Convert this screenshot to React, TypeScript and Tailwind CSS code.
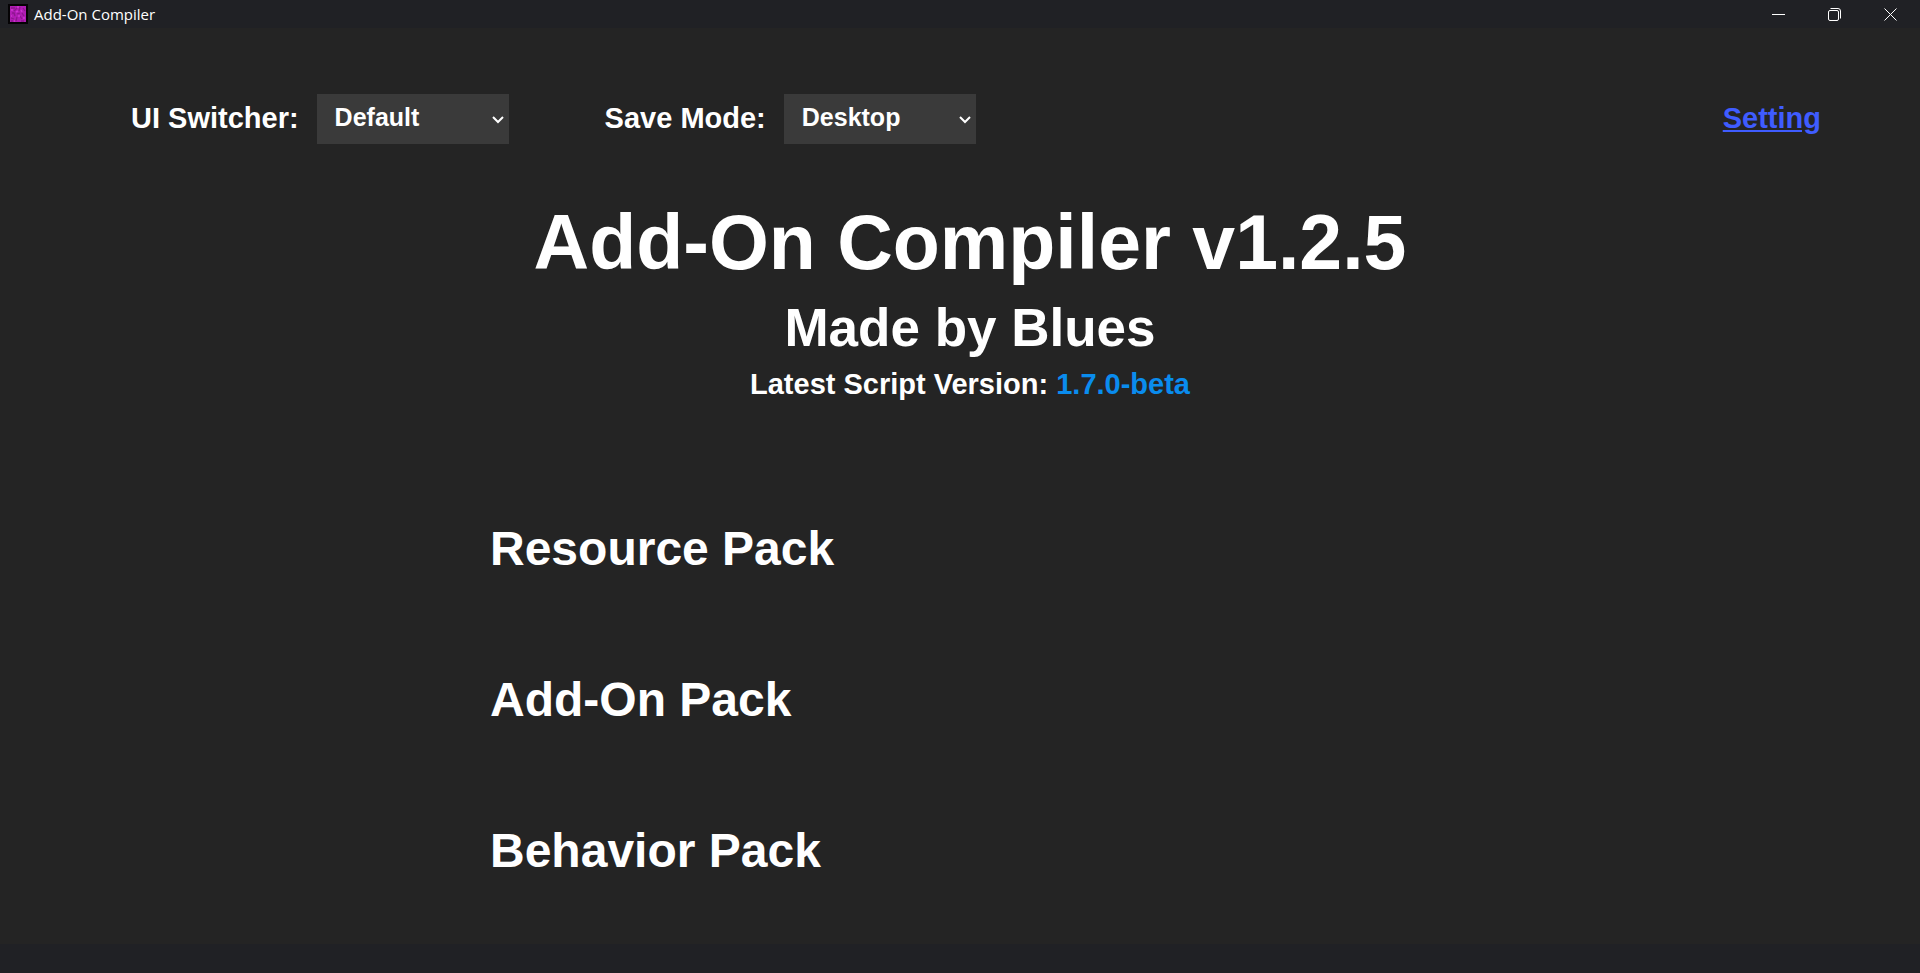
import { useState } from "react";

function AppIcon() {
  return (
    <svg viewBox="0 0 20 20" className="h-5 w-5" aria-hidden="true">
      <rect width="20" height="20" fill="#050305" />
      <rect x="2" y="2" width="16" height="16" fill="#b01db4" />
      <path
        d="M3 4h4M6 7l3-3M12 3l-1 4M15 4l2 3M4 9h2l1 3M9 10l3-1M14 9l2 3M3 14l3 1M9 13l-1 4M12 12l2 3M13 17h3M3 17h2"
        stroke="#8d168f"
        strokeWidth="1.3"
        fill="none"
      />
      <path
        d="M9 3h2M3 6h2M13 6l1 2M8 8l2-1M10 12h2M3 12h1M15 14h2M6 17h1"
        stroke="#cf35d4"
        strokeWidth="1.4"
        fill="none"
      />
    </svg>
  );
}

const windowButton = "flex h-7 w-14 items-center justify-center text-white";

function TitleBar() {
  return (
    <header className="flex h-7 items-center justify-between bg-[#202125] pr-0.5 pl-2">
      <div className="flex items-center gap-1.5">
        <AppIcon />
        <span className="font-['Open_Sans',sans-serif] text-[15px] leading-7 font-normal text-white">
          Add-On Compiler
        </span>
      </div>
      <div className="flex">
        <button type="button" aria-label="Minimize" className={windowButton}>
          <svg viewBox="0 0 13 13" className="h-[13px] w-[13px]" fill="none" stroke="currentColor">
            <path d="M0 6.5h13" />
          </svg>
        </button>
        <button type="button" aria-label="Restore" className={windowButton}>
          <svg viewBox="0 0 13 13" className="h-[13px] w-[13px]" fill="none" stroke="currentColor">
            <rect x="0.5" y="2.5" width="10" height="10" rx="1.5" />
            <path d="M2.5 0.5H10a2.5 2.5 0 0 1 2.5 2.5V10.5" />
          </svg>
        </button>
        <button type="button" aria-label="Close" className={windowButton}>
          <svg viewBox="0 0 13 13" className="h-[13px] w-[13px]" fill="none" stroke="currentColor">
            <path d="M0.5 0.5l12 12M12.5 0.5l-12 12" />
          </svg>
        </button>
      </div>
    </header>
  );
}

type PickerProps = { id: string; label: string; options: string[] };

function Picker({ id, label, options }: PickerProps) {
  const [value, setValue] = useState(options[0]);
  return (
    <div className="flex items-start gap-[18px]">
      <label htmlFor={id} className="text-[29px] leading-[48px]">
        {label}
      </label>
      <div className="relative">
        <select
          id={id}
          value={value}
          onChange={(e) => setValue(e.target.value)}
          className="block h-[50px] w-48 appearance-none bg-[#3a3a3a] pr-6 pb-0.5 pl-[18px] text-[25px] font-bold text-white"
        >
          {options.map((o) => (
            <option key={o}>{o}</option>
          ))}
        </select>
        <svg
          viewBox="0 0 12 8"
          className="pointer-events-none absolute top-[22px] right-[5px] h-2 w-3"
          fill="none"
          stroke="currentColor"
          strokeWidth="2"
          aria-hidden="true"
        >
          <path d="M1 1l5 5 5-5" />
        </svg>
      </div>
    </div>
  );
}

const packs = ["Resource Pack", "Add-On Pack", "Behavior Pack"];

export default function App() {
  return (
    <div className="flex min-h-screen flex-col bg-[#242424] font-['Liberation_Sans',Arial,sans-serif] font-bold text-white">
      <TitleBar />
      <main className="flex-1">
        <nav className="flex items-center justify-between pt-[66px] pr-[99px] pl-[131px]">
          <div className="flex gap-24">
            <Picker id="ui-switcher" label="UI Switcher:" options={["Default", "Classic"]} />
            <Picker id="save-mode" label="Save Mode:" options={["Desktop", "Folder"]} />
          </div>
          <a href="#setting" className="text-[29px] text-[#3f5cff] underline">
            Setting
          </a>
        </nav>
        <div className="pt-[52px] pl-5 text-center">
          <h1 className="text-[77px] leading-[92px]">Add-On Compiler v1.2.5</h1>
          <h2 className="text-[53px] leading-[80px]">Made by Blues</h2>
          <p className="text-[29px] leading-8">
            Latest Script Version: <span className="text-[#0a8cee]">1.7.0-beta</span>
          </p>
        </div>
        <ul className="flex flex-col gap-24 pt-[121px] pl-[490px] text-5xl">
          {packs.map((name) => (
            <li key={name}>
              <h3 className="leading-[55px]">{name}</h3>
            </li>
          ))}
        </ul>
      </main>
      <footer className="h-[29px] bg-[#202125]" />
    </div>
  );
}
